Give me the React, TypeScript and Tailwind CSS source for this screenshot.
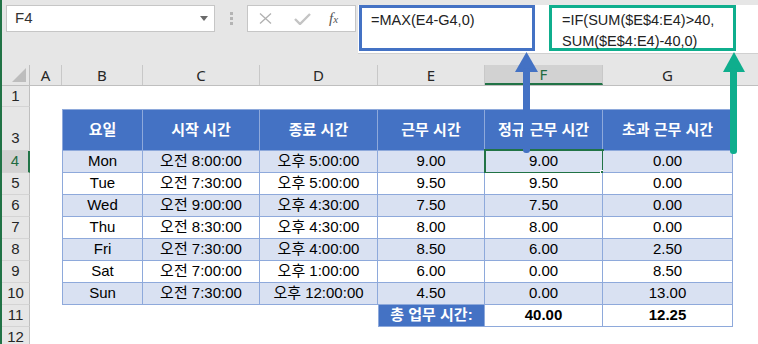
import React from 'react';

const W = ['w-[81px]', 'w-[117px]', 'w-[118px]', 'w-[107px]', 'w-[118px]', 'w-[130px]'];

const rows = [
    ['Mon', '오전 8:00:00', '오후 5:00:00', '9.00', '9.00', '0.00'],
    ['Tue', '오전 7:30:00', '오후 5:00:00', '9.50', '9.50', '0.00'],
    ['Wed', '오전 9:00:00', '오후 4:30:00', '7.50', '7.50', '0.00'],
    ['Thu', '오전 8:30:00', '오후 4:30:00', '8.00', '8.00', '0.00'],
    ['Fri', '오전 7:30:00', '오후 4:00:00', '8.50', '6.00', '2.50'],
    ['Sat', '오전 7:00:00', '오후 1:00:00', '6.00', '0.00', '8.50'],
    ['Sun', '오전 7:30:00', '오후 12:00:00', '4.50', '0.00', '13.00'],
];

const RowHead: React.FC<{ n: number; active?: boolean; bottom?: boolean }> = ({ n, active, bottom }) => (
    <div
        className={`w-[28px] shrink-0 flex justify-center border-b border-[#d4d4d4] ${
            bottom ? 'items-end pb-[1px]' : 'items-center'
        } ${active ? 'bg-[#d2d2d2] border-r-2 border-r-[#217346] text-[#1e6b41]' : 'bg-[#e6e6e6] border-r border-r-[#bfbfbf] text-[#262626]'}`}
    >
        {n}
    </div>
);

const ColHead: React.FC<{ label: string; w: string; active?: boolean }> = ({ label, w, active }) => (
    <div
        className={`${w} shrink-0 flex items-center justify-center border-r border-[#c8c8c8] ${
            active ? 'bg-[#d2d2d2] text-[#1e6b41] border-b-2 border-b-[#217346]' : ''
        }`}
    >
        {label}
    </div>
);

const App: React.FC = () => {
    return (
        <div className="w-[758px] h-[344px] overflow-hidden bg-white relative border-l-2 border-[#217346] font-['Liberation_Sans','Noto_Sans_CJK_KR',sans-serif] text-[15px] text-black">
            {/* Formula bar area */}
            <div className="h-[65px] bg-[#e6e6e6] flex items-start pt-[5px]">
                <div className="ml-[4px] w-[209px] h-[27px] bg-white border border-[#c6c6c6] flex items-center justify-between pl-[8px] pr-[6px] text-[#333]">
                    <span>F4</span>
                    <svg width="8" height="5" viewBox="0 0 8 5"><path d="M0 0h8L4 5z" fill="#6a6a6a" /></svg>
                </div>
                <div className="w-[32px] h-[27px] flex flex-col items-center justify-center gap-[2px]">
                    <div className="w-[3px] h-[3px] bg-[#b4b4b4]" />
                    <div className="w-[3px] h-[3px] bg-[#b4b4b4]" />
                    <div className="w-[3px] h-[3px] bg-[#b4b4b4]" />
                </div>
                <div className="w-[109px] h-[27px] bg-white border border-[#c6c6c6] flex items-center pl-[11px] gap-[22px]">
                    <svg width="13" height="11" viewBox="0 0 13 11"><path d="M1 0.5l11 10M12 0.5l-11 10" stroke="#b0b0b0" strokeWidth="1.3" /></svg>
                    <svg width="17" height="12" viewBox="0 0 17 12"><path d="M1 6l5 5L16 1" stroke="#c4c4c4" strokeWidth="2.4" fill="none" /></svg>
                    <span className="font-['Liberation_Serif',serif] italic text-[15px] text-[#555] -ml-[4px]">
                        f<span className="text-[11px]">x</span>
                    </span>
                </div>
                <div className="ml-[2px] flex-1 h-[49px] bg-white border-b border-[#d0d0d0] flex items-start pl-[1px] text-[14.5px]">
                    <div className="w-[176px] h-[46px] border-[3px] border-[#4472c4] pl-[9px] pt-[2px] leading-[21px] text-[#222]">
                        =MAX(E4-G4,0)
                    </div>
                    <div className="ml-[14px] w-[187px] h-[46px] border-[3px] border-[#0fae8d] pl-[10px] pt-[2px] leading-[21px] text-[#222]">
                        =IF(SUM($E$4:E4)&gt;40,
                        <br />
                        SUM($E$4:E4)-40,0)
                    </div>
                </div>
            </div>

            {/* Column headers */}
            <div className="flex h-[21px] bg-[#e6e6e6] border-b border-[#bfbfbf] text-[#262626] font-['Noto_Sans',sans-serif] text-[15px]">
                <div className="w-[28px] shrink-0 border-r border-[#bfbfbf] flex items-end justify-end pr-[3px] pb-[3px]">
                    <svg width="14" height="14" viewBox="0 0 14 14"><path d="M14 0V14H0z" fill="#bdbdbd" /></svg>
                </div>
                <ColHead label="A" w="w-[32px]" />
                <ColHead label="B" w={W[0]} />
                <ColHead label="C" w={W[1]} />
                <ColHead label="D" w={W[2]} />
                <ColHead label="E" w={W[3]} />
                <ColHead label="F" w={W[4]} active />
                <ColHead label="G" w={W[5]} />
                <div className="flex-1" />
            </div>

            {/* Row 1 */}
            <div className="flex h-[21px]">
                <RowHead n={1} />
            </div>
            {/* Row 2 */}
            <div className="flex h-[2px]">
                <div className="w-[28px] shrink-0 bg-[#e6e6e6] border-r border-[#bfbfbf]" />
            </div>
            {/* Row 3: table header */}
            <div className="flex h-[42px]">
                <RowHead n={3} bottom />
                <div className="w-[32px] shrink-0" />
                {['요일', '시작 시간', '종료 시간', '근무 시간', '정규 근무 시간', '초과 근무 시간'].map((t, i) => (
                    <div
                        key={t}
                        className={`${W[i]} shrink-0 bg-[#4472c4] text-white font-bold flex items-center justify-center border-t border-r border-b border-[#8ea9db] ${
                            i === 0 ? 'border-l' : ''
                        }`}
                    >
                        {t}
                    </div>
                ))}
            </div>

            {/* Data rows */}
            {rows.map((r, ri) => (
                <div key={r[0]} className="flex h-[22px]">
                    <RowHead n={ri + 4} active={ri === 0} />
                    <div className="w-[32px] shrink-0" />
                    {r.map((c, ci) => (
                        <div
                            key={ci}
                            className={`${W[ci]} shrink-0 relative flex items-center justify-center border-r border-b border-[#8ea9db] ${
                                ci === 0 ? 'border-l' : ''
                            } ${ri % 2 === 0 ? 'bg-[#d9e1f2]' : 'bg-white'}`}
                        >
                            {c}
                            {ri === 0 && ci === 4 && (
                                <div className="absolute -left-[1px] -top-[2px] -right-[2px] -bottom-[2px] border-2 border-[#217346]">
                                    <div className="absolute -right-[5px] -bottom-[5px] w-[7px] h-[7px] bg-[#217346] border border-white" />
                                </div>
                            )}
                        </div>
                    ))}
                </div>
            ))}

            {/* Row 11: totals */}
            <div className="flex h-[22px]">
                <RowHead n={11} />
                <div className="w-[32px] shrink-0" />
                <div className="w-[81px] shrink-0" />
                <div className="w-[117px] shrink-0" />
                <div className="w-[118px] shrink-0" />
                <div className="w-[107px] shrink-0 bg-[#4472c4] text-white font-bold flex items-center justify-center border-l border-b border-r border-[#8ea9db]">
                    총 업무 시간:
                </div>
                <div className="w-[118px] shrink-0 font-bold flex items-center justify-center border-b border-r border-[#8ea9db]">
                    40.00
                </div>
                <div className="w-[130px] shrink-0 font-bold flex items-center justify-center border-b border-r border-[#8ea9db]">
                    12.25
                </div>
            </div>

            {/* Row 12 */}
            <div className="flex h-[22px]">
                <RowHead n={12} />
            </div>

            {/* Callout arrows */}
            <svg className="absolute left-0 top-0 pointer-events-none" width="758" height="344" viewBox="0 0 758 344">
                <path d="M513 72L524.5 52L536 72z" fill="#4472c4" />
                <rect x="521" y="68" width="7" height="85" rx="3" fill="#4472c4" />
                <path d="M721 72L732 52L743 72z" fill="#0fae8d" />
                <rect x="728" y="68" width="7" height="86" rx="3" fill="#0fae8d" />
            </svg>
        </div>
    );
};

export default App;
